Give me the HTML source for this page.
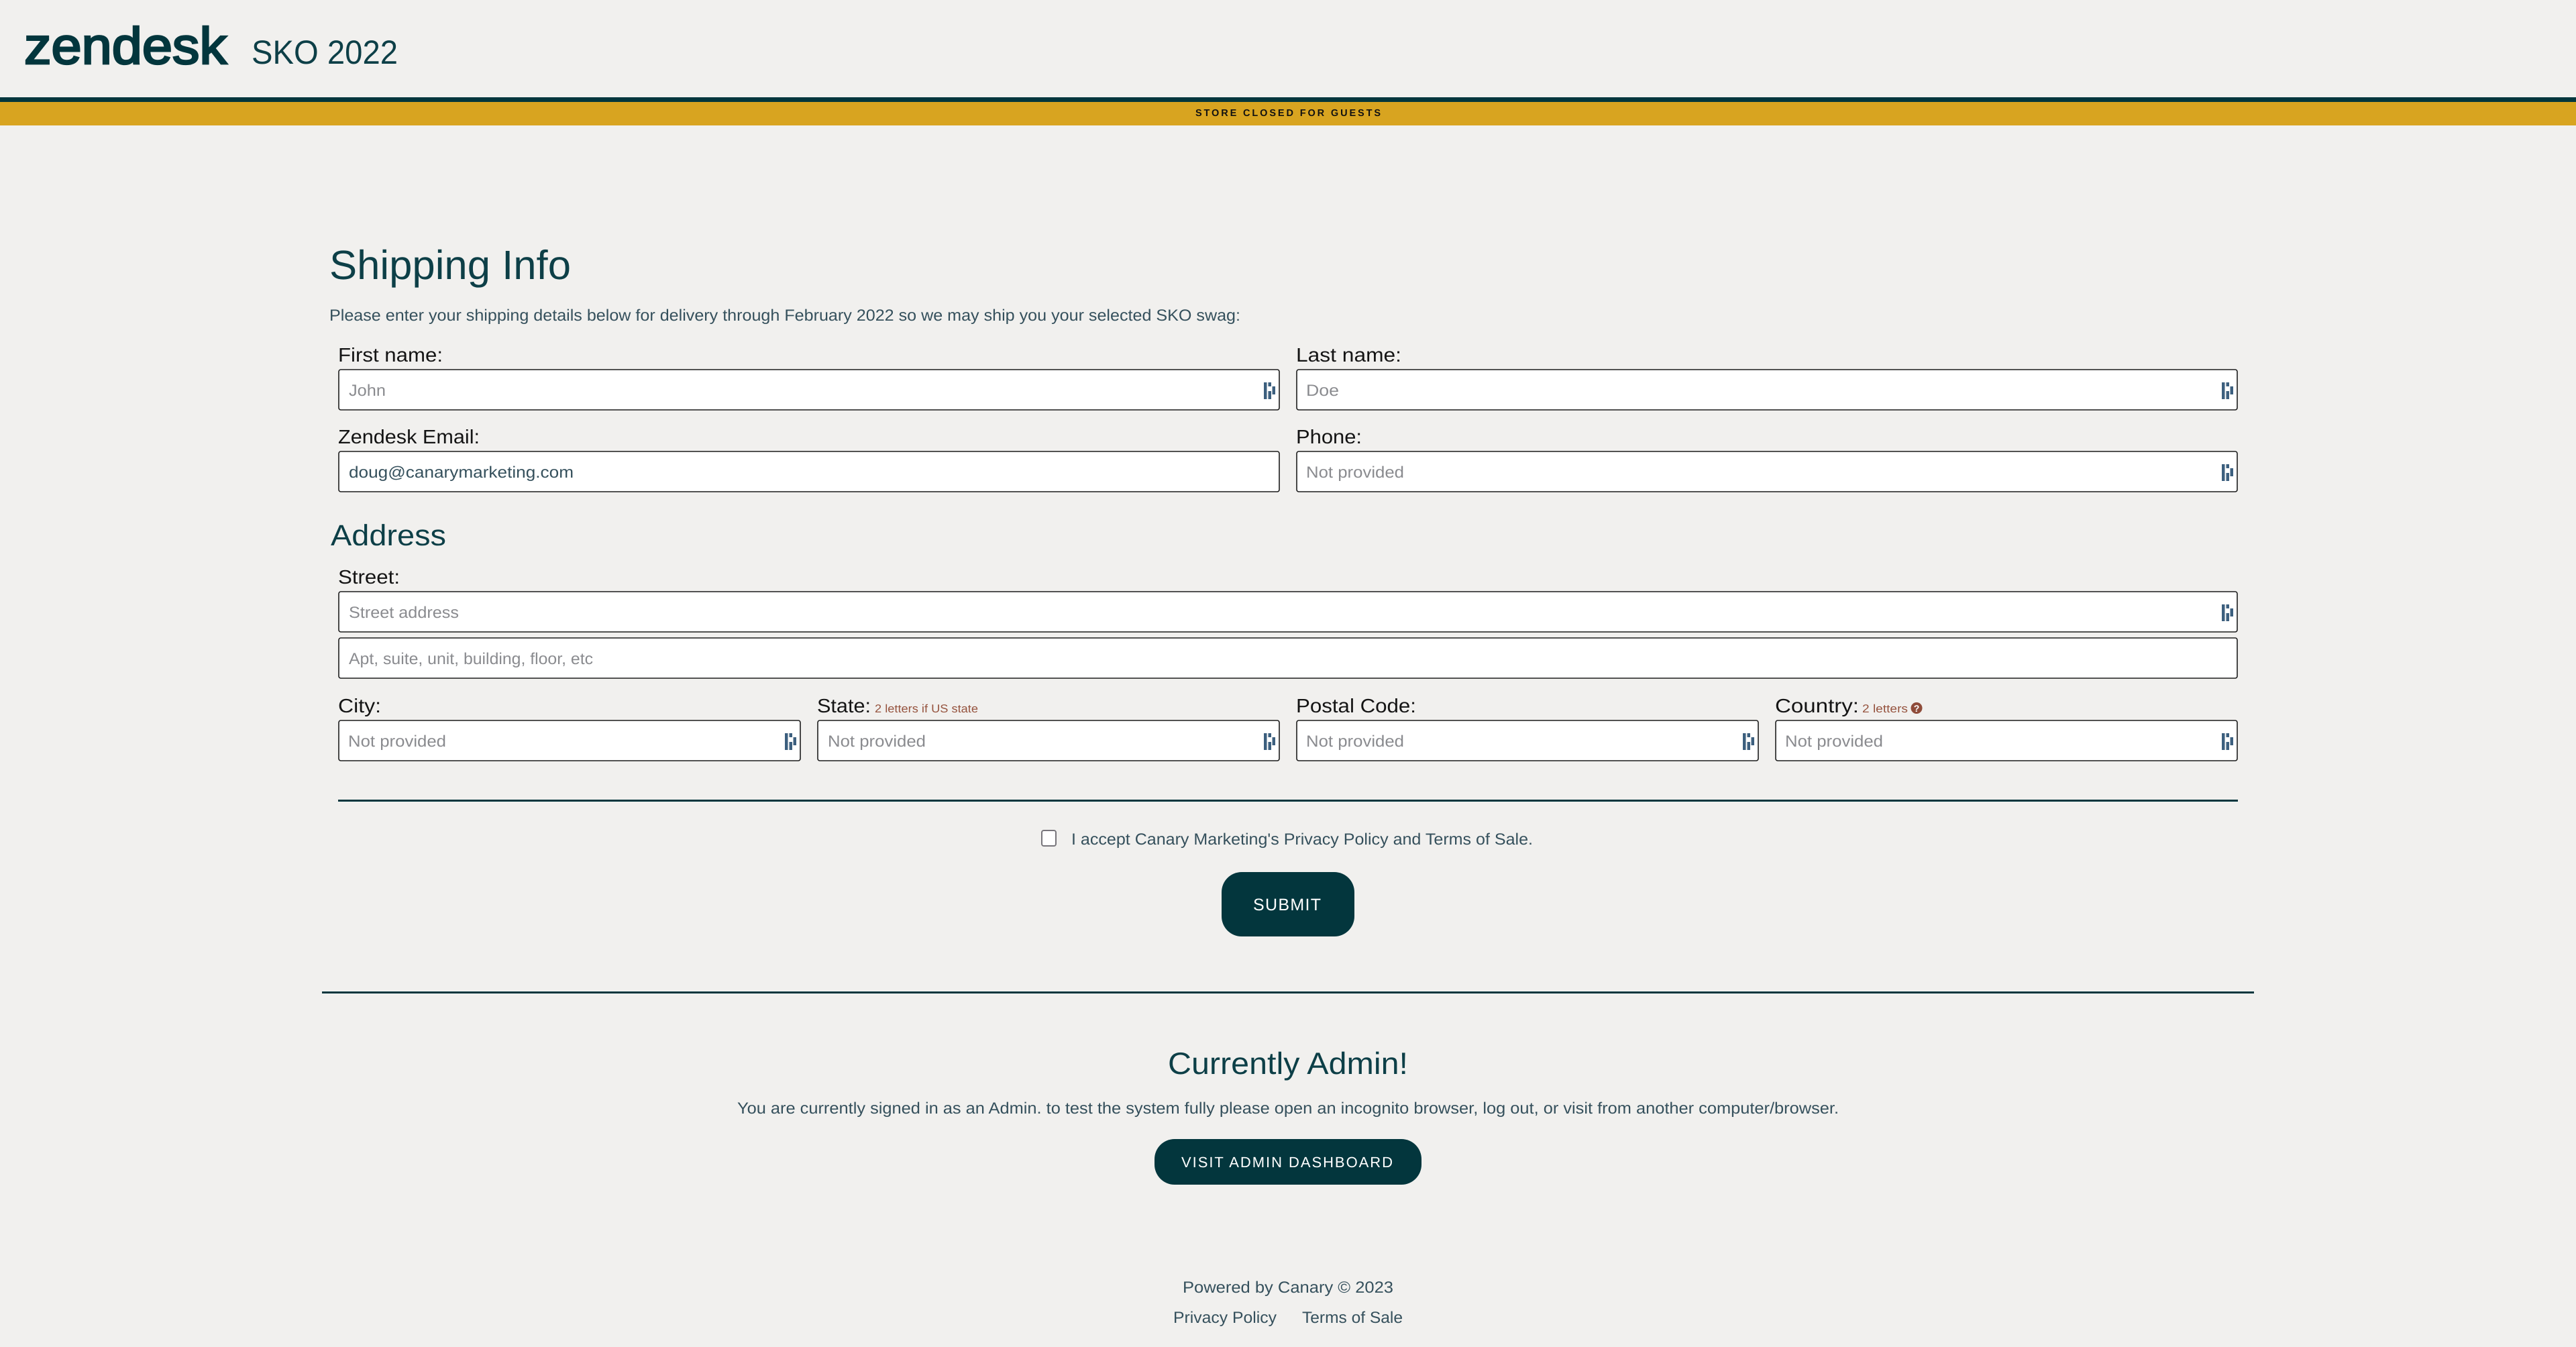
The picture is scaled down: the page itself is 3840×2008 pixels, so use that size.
<!DOCTYPE html>
<html lang="en">
<head>
<meta charset="utf-8">
<title>Shipping Info</title>
<style>
html,body{margin:0;padding:0;width:3840px;height:2008px;overflow:hidden;background:#f1f0ee}
svg{display:block}
text{font-family:"Liberation Sans",sans-serif;text-rendering:geometricPrecision}
.b{font-size:24px;fill:#35505c}
.l{font-size:29px;fill:#141414}
.p{font-size:24px;fill:#8a8b8f}
.h{font-size:17px;fill:#96543f}
.f{fill:#fff;stroke:#1c1c1c;stroke-width:1.600}
.i{fill:#3c5f7e}
.t{fill:#0d3f47}
</style>
</head>
<body>
<svg xmlns="http://www.w3.org/2000/svg" width="3840" height="2008" viewBox="0 0 3840 2008">
<defs>
<g id="ic">
<rect class="i" x="-24" y="20" width="4.500" height="25"/>
<rect class="i" x="-17.500" y="20" width="4.500" height="6"/>
<rect class="i" x="-17.500" y="33" width="4.500" height="12"/>
<rect class="i" x="-11.500" y="26" width="4.500" height="12"/>
</g>
</defs>
<rect width="3840" height="2008" fill="#f1f0ee"/>

<!-- Header -->
<text x="36" y="95" font-size="77" fill="#03363d" stroke="#03363d" stroke-width="2.800" textLength="302" lengthAdjust="spacingAndGlyphs">zendesk</text>
<text class="t" x="375" y="95" font-size="50" textLength="218" lengthAdjust="spacingAndGlyphs">SKO 2022</text>
<rect x="0" y="145" width="3840" height="7" fill="#03363d"/>
<rect x="0" y="152" width="3840" height="35" fill="#d8a420"/>
<text x="1782" y="173" font-size="14.500" font-weight="700" fill="#111" textLength="276" lengthAdjust="spacing">STORE CLOSED FOR GUESTS</text>

<!-- Shipping -->
<text class="t" x="491" y="416" font-size="61" textLength="360" lengthAdjust="spacingAndGlyphs">Shipping Info</text>
<text class="b" x="491" y="478" textLength="1358" lengthAdjust="spacingAndGlyphs">Please enter your shipping details below for delivery through February 2022 so we may ship you your selected SKO swag:</text>

<text class="l" x="504" y="539" textLength="156" lengthAdjust="spacingAndGlyphs">First name:</text>
<rect class="f" x="505" y="551" width="1402" height="60" rx="3"/>
<text class="p" x="520" y="590" textLength="55" lengthAdjust="spacingAndGlyphs">John</text>
<use href="#ic" x="1908" y="550"/>

<text class="l" x="1932" y="539" textLength="157" lengthAdjust="spacingAndGlyphs">Last name:</text>
<rect class="f" x="1933" y="551" width="1402" height="60" rx="3"/>
<text class="p" x="1947" y="590" textLength="49" lengthAdjust="spacingAndGlyphs">Doe</text>
<use href="#ic" x="3336" y="550"/>

<text class="l" x="504" y="661" textLength="211" lengthAdjust="spacingAndGlyphs">Zendesk Email:</text>
<rect class="f" x="505" y="673" width="1402" height="60" rx="3"/>
<text class="b" x="520" y="712" textLength="335" lengthAdjust="spacingAndGlyphs">doug@canarymarketing.com</text>

<text class="l" x="1932" y="661" textLength="98" lengthAdjust="spacingAndGlyphs">Phone:</text>
<rect class="f" x="1933" y="673" width="1402" height="60" rx="3"/>
<text class="p" x="1947" y="712" textLength="146" lengthAdjust="spacingAndGlyphs">Not provided</text>
<use href="#ic" x="3336" y="672"/>

<!-- Address -->
<text class="t" x="493" y="813" font-size="44" textLength="172" lengthAdjust="spacingAndGlyphs">Address</text>
<text class="l" x="504" y="870" textLength="92" lengthAdjust="spacingAndGlyphs">Street:</text>
<rect class="f" x="505" y="882" width="2830" height="60" rx="3"/>
<text class="p" x="520" y="921" textLength="164" lengthAdjust="spacingAndGlyphs">Street address</text>
<use href="#ic" x="3336" y="881"/>
<rect class="f" x="505" y="951" width="2830" height="60" rx="3"/>
<text class="p" x="520" y="990" textLength="364" lengthAdjust="spacingAndGlyphs">Apt, suite, unit, building, floor, etc</text>

<text class="l" x="504" y="1062" textLength="64" lengthAdjust="spacingAndGlyphs">City:</text>
<rect class="f" x="505" y="1074" width="688" height="60" rx="3"/>
<text class="p" x="519" y="1113" textLength="146" lengthAdjust="spacingAndGlyphs">Not provided</text>
<use href="#ic" x="1194" y="1073"/>

<text class="l" x="1218" y="1062" textLength="80" lengthAdjust="spacingAndGlyphs">State:</text>
<text class="h" x="1304" y="1062" textLength="154" lengthAdjust="spacingAndGlyphs">2 letters if US state</text>
<rect class="f" x="1219" y="1074" width="688" height="60" rx="3"/>
<text class="p" x="1234" y="1113" textLength="146" lengthAdjust="spacingAndGlyphs">Not provided</text>
<use href="#ic" x="1908" y="1073"/>

<text class="l" x="1932" y="1062" textLength="179" lengthAdjust="spacingAndGlyphs">Postal Code:</text>
<rect class="f" x="1933" y="1074" width="688" height="60" rx="3"/>
<text class="p" x="1947" y="1113" textLength="146" lengthAdjust="spacingAndGlyphs">Not provided</text>
<use href="#ic" x="2622" y="1073"/>

<text class="l" x="2646" y="1062" textLength="125" lengthAdjust="spacingAndGlyphs">Country:</text>
<text class="h" x="2776" y="1062" textLength="68" lengthAdjust="spacingAndGlyphs">2 letters</text>
<circle cx="2857" cy="1055.500" r="8.500" fill="#8f4c3a"/>
<text x="2857" y="1061" font-size="14" font-weight="700" fill="#fff" text-anchor="middle">?</text>
<rect class="f" x="2647" y="1074" width="688" height="60" rx="3"/>
<text class="p" x="2661" y="1113" textLength="146" lengthAdjust="spacingAndGlyphs">Not provided</text>
<use href="#ic" x="3336" y="1073"/>

<rect x="504" y="1192" width="2832" height="3" fill="#03363d"/>

<!-- Accept -->
<rect x="1553" y="1238" width="21" height="23" rx="3" fill="#fff" stroke="#77757b" stroke-width="2"/>
<text class="b" x="1597" y="1259" textLength="688" lengthAdjust="spacingAndGlyphs">I accept Canary Marketing's Privacy Policy and Terms of Sale.</text>
<rect x="1821" y="1300" width="198" height="96" rx="30" fill="#03363d"/>
<text x="1868" y="1357" font-size="25" fill="#fff" textLength="101" lengthAdjust="spacing">SUBMIT</text>

<rect x="480" y="1478" width="2880" height="3" fill="#03363d"/>

<!-- Admin -->
<text class="t" x="1741" y="1601" font-size="46" textLength="358" lengthAdjust="spacingAndGlyphs">Currently Admin!</text>
<text class="b" x="1099" y="1660" textLength="1642" lengthAdjust="spacingAndGlyphs">You are currently signed in as an Admin. to test the system fully please open an incognito browser, log out, or visit from another computer/browser.</text>
<rect x="1721" y="1698" width="398" height="68" rx="30" fill="#03363d"/>
<text x="1761" y="1740" font-size="22" fill="#fff" textLength="315" lengthAdjust="spacing">VISIT ADMIN DASHBOARD</text>

<!-- Footer -->
<text class="b" x="1763" y="1927" textLength="314" lengthAdjust="spacingAndGlyphs">Powered by Canary © 2023</text>
<text class="b" x="1749" y="1972" textLength="154" lengthAdjust="spacingAndGlyphs">Privacy Policy</text>
<text class="b" x="1941" y="1972" textLength="150" lengthAdjust="spacingAndGlyphs">Terms of Sale</text>
</svg>
</body>
</html>
